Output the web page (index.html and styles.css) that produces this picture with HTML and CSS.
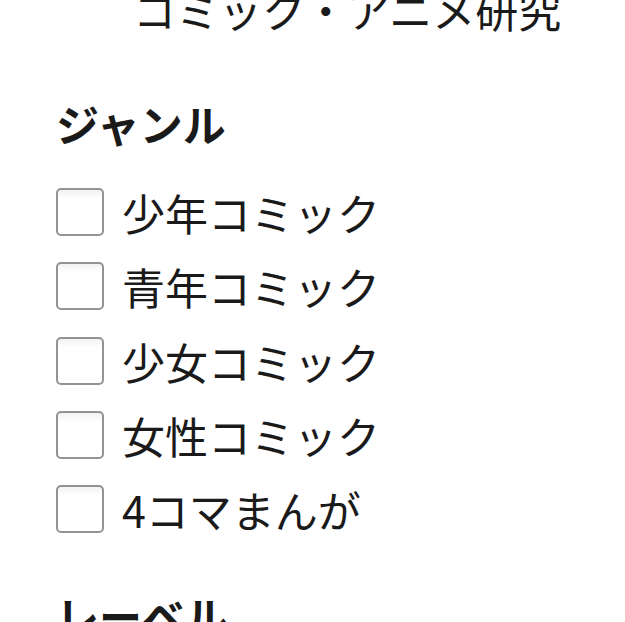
FILE: index.html
```html
<!DOCTYPE html>
<html lang="ja">
<head>
<meta charset="utf-8">
<link rel="stylesheet" href="styles.css">
</head>
<body>
<div class="page">
  <h1 class="title">コミック・アニメ研究</h1>
  <section class="group">
    <h2 class="group-title">ジャンル</h2>
    <ul class="options">
      <li class="option"><span class="box"></span><span class="label">少年コミック</span></li>
      <li class="option"><span class="box"></span><span class="label">青年コミック</span></li>
      <li class="option"><span class="box"></span><span class="label">少女コミック</span></li>
      <li class="option"><span class="box"></span><span class="label">女性コミック</span></li>
      <li class="option"><span class="box"></span><span class="label">4コマまんが</span></li>
    </ul>
  </section>
  <section class="group">
    <h2 class="group-title next">レーベル</h2>
  </section>
</div>
</body>
</html>
```
FILE: styles.css
```css
html, body {
  margin: 0;
  padding: 0;
  background: #fff;
}
body {
  font-family: "Noto Sans CJK JP", "Noto Sans", sans-serif;
  color: #1a1a1a;
  font-size: 43px;
}
.page {
  padding-left: 56px;
  margin-top: -22px;
}
.title {
  font-size: 43px;
  font-weight: 400;
  margin: 0 0 0 77px;
  line-height: 62px;
}
.group-title {
  font-size: 43px;
  font-weight: 700;
  margin: 52px 0 0 0;
  line-height: 62px;
}
.group-title.next {
  margin-top: 38px;
}
.options {
  list-style: none;
  margin: 21px 0 0 0;
  padding: 0;
}
.option {
  display: flex;
  align-items: center;
  height: 74.25px;
  gap: 18px;
}
.box {
  width: 44px;
  height: 44px;
  border: 2px solid #939393;
  border-radius: 5px;
  background: linear-gradient(#f2f2f2, #fff 20%);
  flex: none;
}
.label {
  line-height: 62px;
}
```
